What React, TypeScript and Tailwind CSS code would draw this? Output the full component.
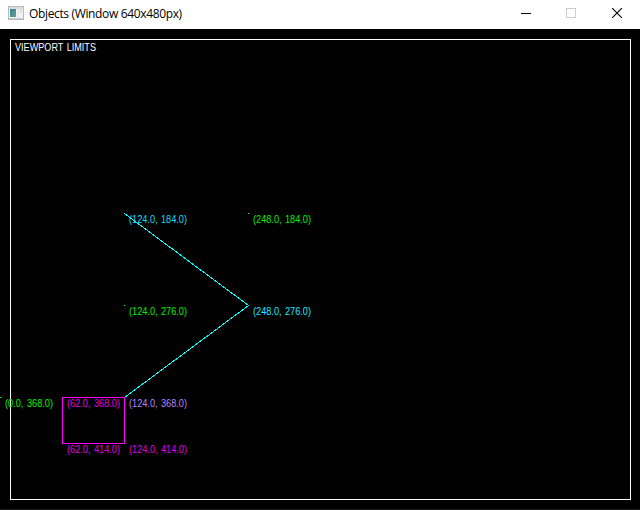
type Label = { x: number; y: number; w: number; text: string; tone: string };

const labels: Label[] = [
  { x: 15, y: 22, w: 81, text: 'VIEWPORT LIMITS', tone: 'fill-white' },
  { x: 129, y: 194, w: 58, text: '(124.0, 184.0)', tone: 'fill-[#10dcfa]' },
  { x: 253, y: 194, w: 58, text: '(248.0, 184.0)', tone: 'fill-[#00f000]' },
  { x: 129, y: 286, w: 58, text: '(124.0, 276.0)', tone: 'fill-[#00f000]' },
  { x: 253, y: 286, w: 58, text: '(248.0, 276.0)', tone: 'fill-[#20e8ff]' },
  { x: 5, y: 378, w: 48, text: '(0.0, 368.0)', tone: 'fill-[#00f000]' },
  { x: 67, y: 378, w: 53, text: '(62.0, 368.0)', tone: 'fill-[#e000e0]' },
  { x: 129, y: 378, w: 58, text: '(124.0, 368.0)', tone: 'fill-[#b880ff]' },
  { x: 67, y: 424, w: 53, text: '(62.0, 414.0)', tone: 'fill-[#e000e0]' },
  { x: 129, y: 424, w: 58, text: '(124.0, 414.0)', tone: 'fill-[#e000e0]' },
];

function AppIcon() {
  return (
    <svg width="16" height="14" viewBox="0 0 16 14" shapeRendering="crispEdges">
      <defs>
        <linearGradient id="pane" x1="0" y1="0" x2="1" y2="1">
          <stop offset="0" stopColor="#4474a4" />
          <stop offset="1" stopColor="#57b176" />
        </linearGradient>
      </defs>
      <rect width="16" height="14" fill="#b5babd" />
      <rect x="1" y="1" width="14" height="2" fill="#d9dde0" />
      <rect x="1" y="3" width="14" height="9" fill="#f2f3f4" />
      <rect x="2" y="3" width="6" height="8" fill="url(#pane)" />
      <rect x="9" y="3" width="2" height="8" fill="#e9eaec" />
      <rect x="12" y="3" width="2" height="2" fill="#c3d8ee" />
      <rect x="12" y="5" width="2" height="2" fill="#d8e8c4" />
      <rect x="1" y="12" width="14" height="1" fill="#c7ccd0" />
    </svg>
  );
}

function TitleBar() {
  return (
    <header className="flex h-[29px] items-start justify-between bg-white text-black">
      <div className="flex items-start pl-2 pt-1.5">
        <AppIcon />
        <h1 className="ml-[5px] whitespace-nowrap font-['Open_Sans','Noto_Sans',sans-serif] text-[12px] leading-4 tracking-[-0.35px]">
          Objects (Window 640x480px)
        </h1>
      </div>
      <div className="flex">
        <button className="flex h-[26px] w-[45px] items-center justify-center" aria-label="Minimize">
          <svg width="10" height="10" viewBox="0 0 10 10" shapeRendering="crispEdges">
            <path d="M0 5.5H10" stroke="#000" />
          </svg>
        </button>
        <button className="flex h-[26px] w-[45px] items-center justify-center" aria-label="Maximize" disabled>
          <svg width="10" height="10" viewBox="0 0 10 10" shapeRendering="crispEdges">
            <path d="M.5 .5H9.5V9.5H.5Z" fill="none" stroke="#ccc" />
          </svg>
        </button>
        <button className="flex h-[26px] w-[47px] items-center justify-center pl-px" aria-label="Close">
          <svg width="10" height="10" viewBox="0 0 10 10">
            <path d="M0 0L10 10M10 0L0 10" stroke="#000" strokeWidth="1.1" />
          </svg>
        </button>
      </div>
    </header>
  );
}

function Scene() {
  return (
    <svg className="block bg-black" width="640" height="480" viewBox="0 0 640 480">
      <g shapeRendering="crispEdges" fill="none">
        <rect x="10.5" y="10.5" width="620" height="460" stroke="#fff" />
        <path d="M124.5 184.5L248.5 276.5L124.5 368.5" stroke="#0ff" />
        <path d="M62 368h63v47h-63zM63 369v45h61v-45z" fill="#f0f" fillRule="evenodd" />
        <rect x="248" y="184" width="1" height="1" fill="#0f0" />
        <rect x="124" y="276" width="1" height="1" fill="#0f0" />
        <rect x="0" y="368" width="1" height="1" fill="#0f0" />
      </g>
      <g className="font-['Liberation_Sans',Arial,sans-serif] text-[10px] [word-spacing:1px]">
        {labels.map((l) => (
          <text key={l.text} x={l.x} y={l.y} textLength={l.w} lengthAdjust="spacingAndGlyphs" className={l.tone}>
            {l.text}
          </text>
        ))}
      </g>
    </svg>
  );
}

export default function App() {
  return (
    <div className="flex h-[510px] w-[640px] flex-col overflow-hidden bg-[#1c1a1d]">
      <TitleBar />
      <Scene />
    </div>
  );
}
